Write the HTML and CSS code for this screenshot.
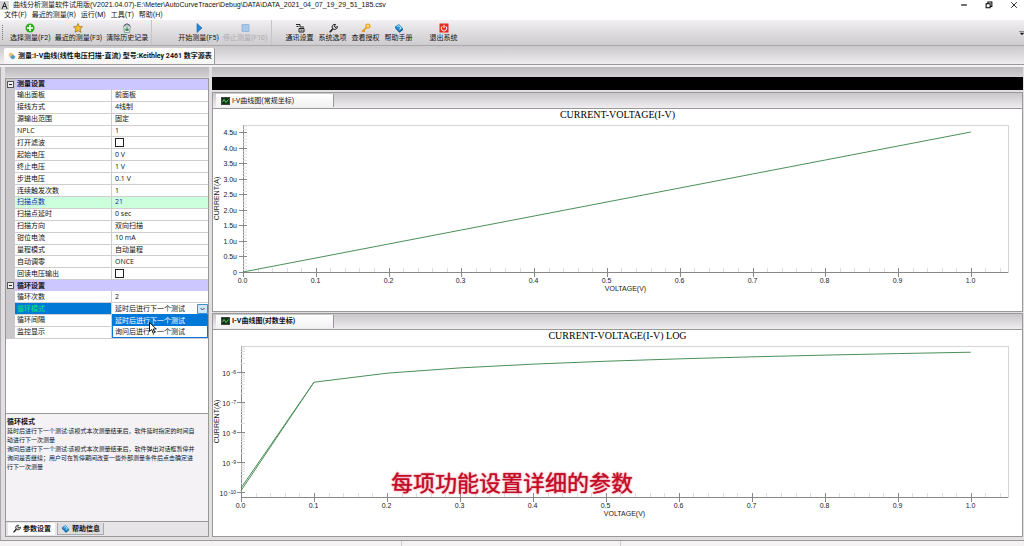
FILE: index.html
```html
<!DOCTYPE html>
<html lang="zh-CN">
<head>
<meta charset="utf-8">
<title>曲线分析测量软件</title>
<link rel="stylesheet" href="styles.css">
</head>
<body>
<svg class="defs" aria-hidden="true">
  <symbol id="wrench" viewBox="0 0 10 10"><path d="M1.5 8.8 5 5.2M4.6 5.5a2.6 2.6 0 0 1 3-4L6.4 3l.5 1.2 1.2.3L9.3 3.2a2.6 2.6 0 0 1-4 2.8L2.3 9.3z" fill="#ddd" stroke="#222" stroke-width="1"/></symbol>
  <symbol id="book" viewBox="0 0 10 10"><path d="M1 3.500 5 1l4 4.500L5.500 9z" fill="#2b95d6"/><path d="M1 3.500v1.600l4.400 4.600L9 7V5.500L5.500 8z" fill="#0b5e9c"/><path d="m3.500 3.500 1.500-.8 2 2.500-1.500 1" fill="none" stroke="#c9ecff"/></symbol>
  <symbol id="scope" viewBox="0 0 9 8"><path d="M0 0h9v8H0z" fill="#444"/><path d="M1 1h7v6H1z" fill="#0c3a12"/><path d="M1.500 5 3 2.500l2 3 2.500-3" fill="none" stroke="#7be07b" stroke-width=".8"/></symbol>
</svg>

<header class="titlebar">
  <svg class="app-icon" viewBox="0 0 9 9"><path d="M0 0h9v9H0z" fill="#d4d4d4"/><path d="M2 8 4.500 1.500 7 8M3 5.500h3" fill="none" stroke="#222"/></svg>
  <h1 class="title">曲线分析测量软件试用版(V2021.04.07)-E:\Meter\AutoCurveTracer\Debug\DATA\DATA_2021_04_07_19_29_51_185.csv</h1>
  <div class="window-buttons">
    <button aria-label="最小化"><svg viewBox="0 0 7 7"><path d="M1 3.500h5" stroke="#000"/></svg></button>
    <button aria-label="还原"><svg viewBox="0 0 7 7"><path d="M1 2.500h3.500V6H1zM2.500 2V.8H6v4H5" fill="none" stroke="#000" stroke-width=".9"/></svg></button>
    <button aria-label="关闭"><svg viewBox="0 0 7 7"><path d="m1 1 5 5M6 1 1 6" stroke="#222" stroke-width=".8"/></svg></button>
  </div>
</header>

<nav class="menubar">
  <button>文件(F)</button><button>最近的测量(R)</button><button>运行(M)</button><button>工具(T)</button><button>帮助(H)</button>
</nav>

<div class="toolbar">
  <i class="grip"></i>
  <div class="tools tools-file">
    <button><svg viewBox="0 0 10 10"><circle cx="5" cy="5" r="4.500" fill="#2faf1c"/><path d="M5 2v6M2 5h6" stroke="#fff" stroke-width="1.600"/></svg>选择测量(F2)</button>
    <button><svg viewBox="0 0 10 10"><path d="m5 .5 1.300 3 3.200.3L7.100 6l.8 3.300L5 7.600 2.100 9.300 2.900 6 .5 3.800l3.200-.3z" fill="#f8c02c" stroke="#9a6a10" stroke-width=".7"/></svg>最近的测量(F3)</button>
    <button><svg viewBox="0 0 10 10"><path d="M1.500 3h7L7.500 9.500h-5z" fill="#e2eae6" stroke="#688" stroke-width=".7"/><path d="M2 2.500 5 .8l3 1.700" fill="none" stroke="#345"/><path d="M3.500 6.500 5 4.500l1.500 2zM3.500 7.500h3" fill="none" stroke="#167a35" stroke-width=".8"/></svg>清除历史记录</button>
  </div>
  <div class="tools tools-run">
    <button><svg viewBox="0 0 10 10"><path d="M3 .5 8 5 3 9.500z" fill="#2388df" stroke="#1460a8" stroke-width=".6"/></svg>开始测量(F5)</button>
    <button disabled><svg viewBox="0 0 10 10"><path d="M2 1.500h7v7H2z" fill="#a9c8ea" stroke="#8bb0dc" stroke-width=".8"/></svg>停止测量(F10)</button>
  </div>
  <div class="tools tools-system">
    <button><svg viewBox="0 0 10 10"><path d="M1 1.500h4v2.500h4M1.500 3.500h2M9 5.500H4V9h5z" fill="none" stroke="#222"/><path d="M5.500 7.200h2" stroke="#222"/></svg>通讯设置</button>
    <button><svg><use href="#wrench"/></svg>系统选项</button>
    <button><svg viewBox="0 0 10 10"><path d="M1 8.800 5.500 4.500M2.500 7.500l1.300 1.300" stroke="#e09a12" stroke-width="1.600"/><circle cx="6.900" cy="3.100" r="2" fill="#ffe28a" stroke="#eea51c" stroke-width="1.300"/></svg>查看授权</button>
    <button><svg><use href="#book"/></svg>帮助手册</button>
    <button class="exit"><svg viewBox="0 0 10 10"><path d="M.5.5h9v9h-9z" fill="#e22c20"/><path d="M3.300 3.200a2.700 2.700 0 1 0 3.400 0M5 1.800v3.400" fill="none" stroke="#fff"/></svg>退出系统</button>
  </div>
  <svg class="overflow" viewBox="0 0 5 4"><path d="M0 .5h5M1 2h4L3 4z" stroke="#555" fill="#000" stroke-width=".6"/></svg>
</div>

<div class="doc-tabs">
  <button class="doc-tab"><svg viewBox="0 0 8 8"><circle cx="3" cy="3" r="2.300" fill="#e9c37a"/><path d="M2 5.500 5 2.500l2.500 2.500L5 7.500z" fill="#4b9cc8"/></svg>测量:I-V曲线(线性电压扫描-直流) 型号:Keithley 2461 数字源表</button>
</div>

<main class="workspace">
  <aside class="side">
    <div class="pane-head"></div>
    <div class="props">
      <table class="grid">
        <tbody>
        <tr class="group"><td class="gutter"><button class="fold" aria-label="折叠"></button></td><th colspan="2">测量设置</th></tr>
        <tr><td class="gutter"></td><th>输出面板</th><td>前面板</td></tr>
        <tr><td class="gutter"></td><th>接线方式</th><td>4线制</td></tr>
        <tr><td class="gutter"></td><th>源输出范围</th><td>固定</td></tr>
        <tr><td class="gutter"></td><th>NPLC</th><td>1</td></tr>
        <tr><td class="gutter"></td><th><label for="filter">打开滤波</label></th><td><input type="checkbox" id="filter"></td></tr>
        <tr><td class="gutter"></td><th>起始电压</th><td>0 V</td></tr>
        <tr><td class="gutter"></td><th>终止电压</th><td>1 V</td></tr>
        <tr><td class="gutter"></td><th>步进电压</th><td>0.1 V</td></tr>
        <tr><td class="gutter"></td><th>连续触发次数</th><td>1</td></tr>
        <tr class="computed"><td class="gutter"></td><th>扫描点数</th><td>21</td></tr>
        <tr><td class="gutter"></td><th>扫描点延时</th><td>0 sec</td></tr>
        <tr><td class="gutter"></td><th>扫描方向</th><td>双向扫描</td></tr>
        <tr><td class="gutter"></td><th>钳位电流</th><td>10 mA</td></tr>
        <tr><td class="gutter"></td><th>量程模式</th><td>自动量程</td></tr>
        <tr><td class="gutter"></td><th>自动调零</th><td>ONCE</td></tr>
        <tr><td class="gutter"></td><th><label for="readback">回读电压输出</label></th><td><input type="checkbox" id="readback"></td></tr>
        <tr class="group"><td class="gutter"><button class="fold" aria-label="折叠"></button></td><th colspan="2">循环设置</th></tr>
        <tr><td class="gutter"></td><th>循环次数</th><td>2</td></tr>
        <tr class="active"><td class="gutter"></td><th><label for="mode">循环模式</label></th><td class="picker">
          <div class="combo">
            <select id="mode"><option>延时后进行下一个测试</option><option>询问后进行下一个测试</option></select>
            <svg class="chevron" viewBox="0 0 11 10"><path d="M.5.5h10v9H.5z" fill="#cfe6f8" stroke="#3c8fd0"/><path d="m3.500 4 2 2 2-2" fill="none" stroke="#345"/></svg>
            <ul class="choices"><li class="hover">延时后进行下一个测试</li><li>询问后进行下一个测试</li></ul>
            <svg class="cursor" viewBox="0 0 8 12"><path d="M.5.5v9l2.200-2 1.500 3.700 1.500-.7L4.200 7h3z" fill="#fff" stroke="#000" stroke-width=".9"/></svg>
          </div></td></tr>
        <tr><td class="gutter"></td><th>循环间隔</th><td></td></tr>
        <tr><td class="gutter"></td><th>监控显示</th><td></td></tr>
        </tbody>
      </table>
    </div>
    <section class="hint">
      <h2>循环模式</h2>
      <p>延时后进行下一个测试:该模式本次测量结束后，软件延时指定的时间自<br>动进行下一次测量<br>询问后进行下一个测试:该模式本次测量结束后，软件弹出对话框暂停并<br>询问是否继续；用户可在暂停期间改变一些外部测量条件后点击确定进<br>行下一次测量</p>
    </section>
    <div class="side-tabs">
      <button class="selected"><svg><use href="#wrench"/></svg>参数设置</button>
      <button><svg><use href="#book"/></svg>帮助信息</button>
    </div>
  </aside>

  <section class="charts">
    <div class="pane-head"></div>
    <div class="readout"></div>
    <div class="chart-pane">
      <div class="chart-tabs"><button><svg><use href="#scope"/></svg>I-V曲线图(常规坐标)</button></div>
      <div class="plot" id="linear"></div>
    </div>
    <div class="chart-pane lower">
      <div class="chart-tabs"><button class="bold"><svg><use href="#scope"/></svg>I-V曲线图(对数坐标)</button></div>
      <div class="plot" id="log"></div>
    </div>
    <p class="caption">每项功能设置详细的参数</p>
  </section>
</main>

<footer class="status"><span></span><span></span><span></span></footer>
<script src="charts.js"></script>
</body>
</html>
```
FILE: charts.js
```js
const NS = 'http://www.w3.org/2000/svg';

function add(parent, name, attrs, text) {
  const el = document.createElementNS(NS, name);
  for (const key in attrs) el.setAttribute(key, attrs[key]);
  if (text !== undefined) el.textContent = text;
  parent.appendChild(el);
  return el;
}

function line(svg, x1, y1, x2, y2, cls) {
  add(svg, 'line', { x1, y1, x2, y2, class: cls });
}

function frame(host, title, left, top, bottomGap) {
  host.replaceChildren();
  const w = host.clientWidth, h = host.clientHeight;
  const svg = add(host, 'svg', { width: w, height: h, role: 'img' });
  const box = { svg, left, top, right: w - 14, bottom: h - bottomGap };
  box.unit = (box.right - left) / 1.051;
  add(svg, 'rect', { x: left + .5, y: top + .5, width: box.right - left, height: box.bottom - top, class: 'frame' });
  line(svg, left + .5, top, left + .5, box.bottom, 'axis');
  line(svg, left, box.bottom + .5, box.right, box.bottom + .5, 'axis');
  add(svg, 'text', { x: w / 2, y: 9, class: 'plot-title' }, title);
  add(svg, 'text', { x: (left + box.right) / 2, y: box.bottom + 19, class: 'unit' }, 'VOLTAGE(V)');
  const ym = (top + box.bottom) / 2;
  add(svg, 'text', { x: 6, y: ym, class: 'unit', transform: `rotate(-90 6 ${ym})` }, 'CURRENT(A)');
  // A labelled division every 0.1 V, a small one every 0.02 V.
  for (let i = 0; i <= 52; i++) {
    const x = Math.round(left + i * .02 * box.unit) + .5;
    const major = i % 5 === 0;
    line(svg, x, box.bottom - 4, x, box.bottom + (major ? 5 : 0), major ? 'tick' : 'minor');
    if (major) add(svg, 'text', { x: x - 1, y: box.bottom + 11, class: 'num' }, (i * .02).toFixed(1));
  }
  return box;
}

function drawLinear() {
  const b = frame(document.getElementById('linear'), 'CURRENT-VOLTAGE(I-V)', 30, 16, 39);
  const step = (b.bottom - b.top) / 9.45;
  for (let i = 0; i <= 9; i++) {
    const y = Math.round(b.bottom - i * step) + .5;
    line(b.svg, b.left - 4, y, b.left + 4, y, 'tick');
    add(b.svg, 'text', { x: b.left - 6, y: y + 2, class: 'num end' }, i ? (i / 2).toFixed(1) + 'u' : '0');
    for (let k = 1; k < 5; k++) {
      const m = y - k * step / 5;
      if (m > b.top) line(b.svg, b.left, m, b.left + 4, m, 'minor');
    }
  }
  const pts = [];
  for (let i = 0; i <= 10; i++) pts.push([b.left + i / 10 * b.unit, b.bottom - i * .9 * step].join());
  add(b.svg, 'polyline', { points: pts.join(' '), class: 'trace' });
}

function drawLog() {
  const b = frame(document.getElementById('log'), 'CURRENT-VOLTAGE(I-V) LOG', 28, 16, 39);
  const dec = (b.bottom - b.top) / 5.03;
  const base = b.bottom - dec * .17;
  for (let d = 0; d < 5; d++) {
    const y = Math.round(base - d * dec) + .5;
    line(b.svg, b.left - 4, y, b.left + 4, y, 'tick');
    const t = add(b.svg, 'text', { x: b.left - 5, y: y + 3, class: 'num end' }, '10');
    add(t, 'tspan', { class: 'sup', dy: -2 }, ' -' + (10 - d));
    for (let k = 2; k < 10; k++) {
      const m = y - Math.log10(k) * dec;
      if (m > b.top) line(b.svg, b.left, m, b.left + 4, m, 'minor');
    }
  }
  const point = (i, current) =>
    [b.left + i / 10 * b.unit, base - (Math.log10(current) + 10) * dec].join();
  const forward = [point(0, 1.1e-10)];
  for (let i = 1; i <= 10; i++) forward.push(point(i, 4.5e-7 * i));
  const back = [point(0, 1.35e-10), point(1, 4.5e-7)];
  for (const pts of [forward, back]) add(b.svg, 'polyline', { points: pts.join(' '), class: 'trace' });
}

function draw() { drawLinear(); drawLog(); }
draw();
addEventListener('resize', draw);
```
FILE: styles.css
```css
* { box-sizing: border-box; }
body {
  margin: 0;
  height: 100vh;
  display: flex;
  flex-direction: column;
  overflow: hidden;
  background: #f5f2f4;
  color: #111;
  font: 7px/10px "Open Sans", "Noto Sans CJK SC", sans-serif;
}
button, select, input { font: inherit; color: inherit; margin: 0; padding: 0; border: 0; background: none; }
h1, h2, p, ul { margin: 0; padding: 0; font: inherit; }
svg { display: block; flex: none; }
.defs { position: absolute; width: 0; height: 0; }

.titlebar, .menubar, .toolbar, .doc-tabs { font-family: Roboto, "Noto Sans CJK SC", sans-serif; }
.titlebar { display: flex; align-items: center; gap: 4px; height: 10px; background: #fff; }
.app-icon { width: 9px; height: 9px; }
.title { flex: 1; white-space: nowrap; font-family: "Liberation Sans", "Noto Sans CJK SC", sans-serif; }
.window-buttons { display: flex; gap: 17px; padding-right: 6px; }
.window-buttons svg { width: 8px; height: 8px; }
.menubar { display: flex; gap: 5px; height: 10px; padding-left: 4px; background: #fff; }

.toolbar {
  display: flex;
  height: 26px;
  flex: none;
  background: linear-gradient(#f2f0f2, #dedcde 50%, #cfcccf);
  border-bottom: 1px solid #aaa8aa;
}
.grip { width: 3px; margin: 5px 5px 5px 2px; border-left: 1px dotted #777; }
.tools { display: flex; align-items: center; gap: 4px; }
.tools button { display: flex; flex-direction: column; align-items: center; white-space: nowrap; }
.tools svg { width: 10px; height: 10px; }
.tools-file { padding-right: 3px; border-right: 1px solid #c6c4c6; }
.tools-run { padding-left: 26px; padding-right: 3px; border-right: 1px solid #c6c4c6; }
.tools-system { padding-left: 14px; gap: 5px; }
.tools .exit { margin-left: 12px; }
.tools button:disabled { color: #aaa; }
.overflow { width: 5px; height: 4px; margin: 11px 0 0 auto; }

.doc-tabs { display: flex; flex: none; height: 19px; padding: 2px 4px 0; background: linear-gradient(#cac8ca, #efedef); border-bottom: 1px solid #999; }
.doc-tab { display: flex; align-items: center; gap: 2px; padding: 0 2px 0 4px; background: linear-gradient(#fff, #f7f5f7); border-right: 1px solid #999; border-radius: 2px 2px 0 0; font-weight: bold; white-space: nowrap; }
.doc-tab svg { width: 8px; height: 8px; }

.workspace { display: flex; flex: 1; min-height: 0; margin-top: 2px; border-bottom: 1px solid #999; background: #e2dfe2; }
.pane-head { flex: none; height: 10px; background: linear-gradient(#bbb9bb, #d2d0d2); }
.side { display: flex; flex-direction: column; flex: none; width: 210px; padding: 0 1px 3px 4px; border-left: 1px solid #aaa; }
.props { flex: 1; min-height: 0; margin-top: 1px; background: #fff; border: 1px solid #999; }
.grid { width: 100%; height: 260px; table-layout: fixed; border-collapse: collapse; }
.grid th, .grid td { padding: 0 0 0 2px; border-bottom: 1px solid #cfcdcf; font-weight: normal; text-align: left; line-height: 10px; white-space: nowrap; }
.grid tr:not(.group) th { width: 98px; border-right: 1px solid #cfcdcf; }
.grid .gutter { width: 9px; padding: 0 1px; background: #cbc8cb; border: 0; }
.grid .group th { background: #ccc8ff; font-weight: bold; border: 0; }
.fold { display: block; width: 7px; height: 7px; border: 1px solid #555; background: linear-gradient(#222, #222) center / 3px 1px no-repeat #eee; }
.grid tr:not(.group) td:last-child { padding-left: 3px; }
.grid input { display: block; appearance: none; width: 9px; height: 9px; border: 1px solid #222; background: #fff; }
.computed { background: #ccffdc; color: #1226b0; }
.active th { background: #0078d7; color: #00e676; }
.grid tr:not(.group) .picker:last-child { padding: 0; }
.combo { position: relative; }
.combo select { display: block; appearance: none; width: 100%; height: 10px; padding-left: 3px; }
.chevron { position: absolute; top: 0; right: 0; width: 11px; height: 10px; }
.choices { position: absolute; z-index: 1; top: 100%; left: 0; right: 0; list-style: none; background: #fff; border: 1px solid #0078d7; }
.choices li { padding-left: 2px; line-height: 11px; }
.choices .hover { background: #0078d7; color: #fff; }
.cursor { position: absolute; z-index: 2; top: 18px; left: 37px; width: 8px; height: 12px; }

.hint { flex: none; height: 108px; padding: 3px 1px; background: #f5f2f5; border: 1px solid #999; border-top: 0; font-size: 6px; line-height: 9px; white-space: nowrap; }
.hint h2 { font-size: 7px; line-height: 10px; font-weight: bold; }
.side-tabs { display: flex; flex: none; gap: 2px; height: 15px; padding: 1px 2px; border: 1px solid #999; border-top: 0; background: #e6e4e6; }
.side-tabs button { display: flex; align-items: center; gap: 2px; padding: 0 3px; border: 1px solid #aaa; border-top: 0; background: #dedcde; font-weight: bold; }
.side-tabs .selected { background: #fff; border-color: #fff; }
.side-tabs svg { width: 9px; height: 9px; }

.charts { position: relative; display: flex; flex-direction: column; flex: 1; min-width: 0; margin-left: 2px; padding: 0 1px 3px 0; }
.readout { flex: none; height: 13px; background: #000; }
.chart-pane { display: flex; flex-direction: column; flex: 220 1 0; min-height: 0; margin: 2px 0 1px; border: 1px solid #999; background: #fff; }
.chart-pane.lower { flex-grow: 225; margin: 0; }
.chart-tabs { display: flex; flex: none; height: 16px; padding: 1px 3px; background: linear-gradient(#c8c6c8, #efedef); border-bottom: 1px solid #999; }
.chart-tabs button { display: flex; align-items: center; gap: 2px; width: 118px; padding-left: 5px; background: linear-gradient(#fff, #f3f1f3); border-right: 1px solid #999; white-space: nowrap; font-family: Roboto, "Noto Sans CJK SC", sans-serif; }
.chart-tabs .bold { font-weight: bold; }
.chart-tabs svg { width: 9px; height: 8px; }
.plot { flex: 1; min-height: 0; overflow: hidden; }
.frame { fill: none; stroke: #d5d5d5; }
.axis { stroke: #888; }
.tick { stroke: #888; }
.minor { stroke: #ddd; }
.trace { fill: none; stroke: #4b8f59; }
.plot-title { font: 10px "Liberation Serif", serif; text-anchor: middle; }
.unit, .num { font: 7px "Liberation Sans", sans-serif; text-anchor: middle; fill: #222; }
.num.end { text-anchor: end; }
.sup { font-size: 5px; }
.caption { position: absolute; left: 0; right: 0; bottom: 46px; padding-right: 212px; font: 22px/26px "Noto Sans CJK SC", sans-serif; color: #c40d26; text-align: center; text-shadow: 0 0 1px #c40d26, 0 0 3px #f0a0b4; white-space: nowrap; }

.status { display: flex; flex: none; height: 5px; background: #f5f2f4; }
.status span { width: 219px; border-right: 1px solid #ccc; }
.status span:first-child { width: 402px; }
.status span:last-child { flex: 1; border: 0; }
```
